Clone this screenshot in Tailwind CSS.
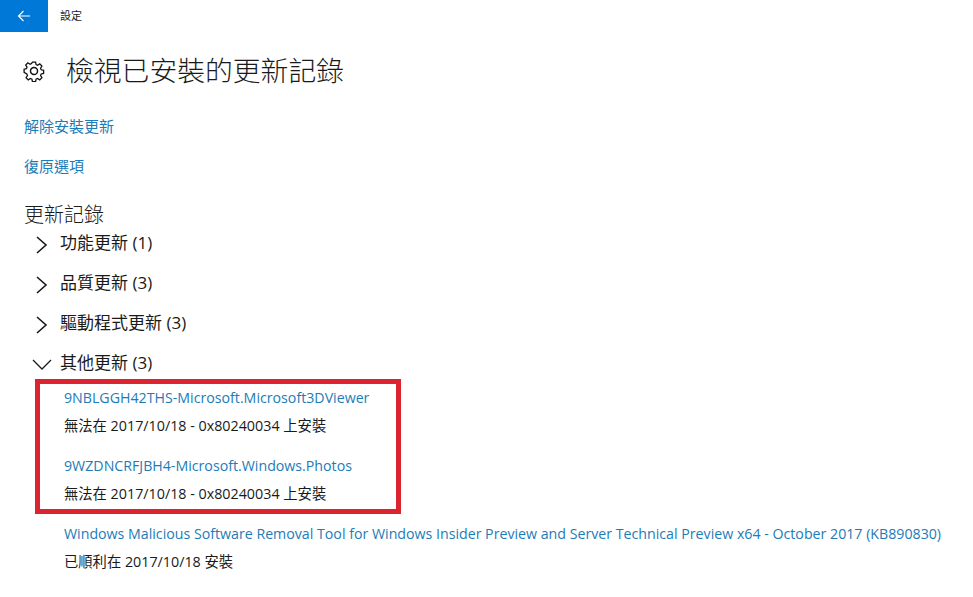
<!DOCTYPE html>
<html lang="zh-Hant">
  <head>
    <meta charset="UTF-8" />
    <title>設定</title>
    <script src="https://cdn.jsdelivr.net/npm/@tailwindcss/browser@4"></script>
  </head>
  <body class="relative w-[973px] h-[597px] overflow-hidden bg-white text-[#1a1a1a] font-['Open_Sans','Noto_Sans_CJK_TC',sans-serif]">
    <!-- top bar -->
    <div class="flex items-center h-8">
      <div class="flex items-center justify-center w-12 h-8 bg-[#0078d7]">
        <svg class="w-3.5 h-3.5" viewBox="0 0 14 14" fill="none" stroke="#fff" stroke-width="1.1">
          <path d="M13 7H1.5M6.5 2 1.5 7l5 5" />
        </svg>
      </div>
      <span class="ml-3 text-[11px]">設定</span>
    </div>

    <!-- title -->
    <div class="flex items-center h-[42px] mt-[18px] pl-[23px]">
      <svg class="w-[22px] h-[22px]" viewBox="0 0 20 20" fill="none" stroke="#111" stroke-width="1.3">
        <circle cx="10" cy="10" r="3.2" />
        <path d="M8.4 1h3.2l.5 2.5 1.5.7 2.2-1.4 2.2 2.3-1.4 2.1.7 1.6 2.4.5v3.2l-2.4.5-.7 1.6 1.4 2.1-2.2 2.3-2.2-1.4-1.5.7-.5 2.5H8.4l-.5-2.5-1.5-.7-2.2 1.4-2.2-2.3 1.4-2.1-.7-1.6L0 11.4V8.2l2.3-.5.7-1.6-1.4-2.1 2.2-2.3 2.2 1.4 1.5-.7z" transform="translate(1 1) scale(.9)" />
      </svg>
      <h1 class="ml-[21px] text-[27.8px] font-light">檢視已安裝的更新記錄</h1>
    </div>

    <!-- links -->
    <div class="mt-[24px] pl-6 flex flex-col gap-[20px] text-[15px] leading-5 text-[#1c7cb8]">
      <a>解除安裝更新</a>
      <a>復原選項</a>
    </div>

    <!-- history -->
    <h2 class="mt-[25px] pl-6 text-[20px] leading-7 font-light">更新記錄</h2>
    <div class="flex flex-col gap-[18px] mt-[3px] text-[17px] leading-[22px]">
      <div class="flex items-center">
        <svg class="ml-[36px] mt-[3px] w-3 h-[18px]" viewBox="0 0 12 18" fill="none" stroke="#1a1a1a" stroke-width="1.6"><path d="M1 1l9 8-9 8" /></svg>
        <span class="ml-[12px]">功能更新 (1)</span>
      </div>
      <div class="flex items-center">
        <svg class="ml-[36px] mt-[3px] w-3 h-[18px]" viewBox="0 0 12 18" fill="none" stroke="#1a1a1a" stroke-width="1.6"><path d="M1 1l9 8-9 8" /></svg>
        <span class="ml-[12px]">品質更新 (3)</span>
      </div>
      <div class="flex items-center">
        <svg class="ml-[36px] mt-[3px] w-3 h-[18px]" viewBox="0 0 12 18" fill="none" stroke="#1a1a1a" stroke-width="1.6"><path d="M1 1l9 8-9 8" /></svg>
        <span class="ml-[12px]">驅動程式更新 (3)</span>
      </div>
      <div class="flex items-center">
        <svg class="ml-[32px] mt-[1px] w-[20px] h-[18px]" viewBox="0 0 20 18" fill="none" stroke="#1a1a1a" stroke-width="1.3"><path d="M1 5l9 9 9-9" /></svg>
        <span class="ml-[8px]">其他更新 (3)</span>
      </div>
    </div>

    <!-- other updates -->
    <div class="mt-[14px] pl-16 flex flex-col text-[14.2px] leading-5">
      <a class="text-[#1c7cb8]">9NBLGGH42THS-Microsoft.Microsoft3DViewer</a>
      <p class="mt-2 text-[14.3px]">無法在 2017/10/18 - 0x80240034 上安裝</p>
      <a class="mt-5 text-[#1c7cb8]">9WZDNCRFJBH4-Microsoft.Windows.Photos</a>
      <p class="mt-2 text-[14.3px]">無法在 2017/10/18 - 0x80240034 上安裝</p>
      <a class="mt-5 text-[#1c7cb8] whitespace-nowrap">Windows Malicious Software Removal Tool for Windows Insider Preview and Server Technical Preview x64 - October 2017 (KB890830)</a>
      <p class="mt-2 text-[14.3px]">已順利在 2017/10/18 安裝</p>
    </div>

    <!-- annotation drawn over the screenshot -->
    <div class="absolute left-[35px] top-[379px] w-[366px] h-[135px] border-[5px] border-[#dc2330]"></div>
  </body>
</html>
